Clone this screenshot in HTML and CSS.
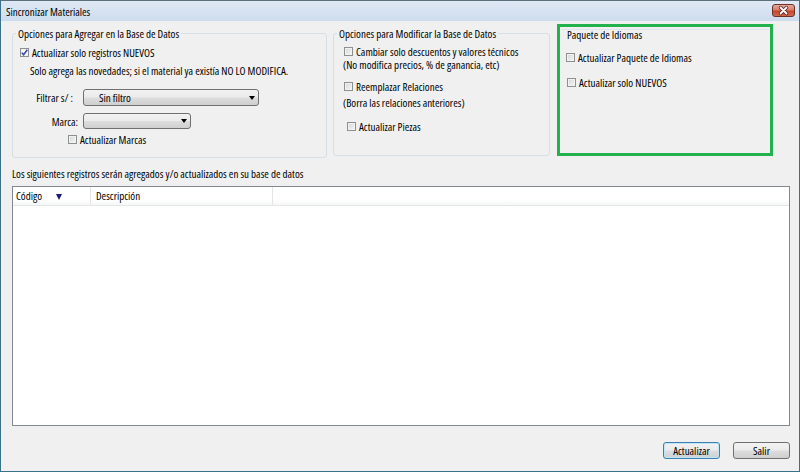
FILE: index.html
```html
<!DOCTYPE html>
<html lang="es">
<head>
<meta charset="utf-8">
<title>Sincronizar Materiales</title>
<link rel="stylesheet" href="styles.css">
</head>
<body>
<div class="window">
  <div class="titlebar">
    <span class="title">Sincronizar Materiales</span>
    <span class="close">
      <svg width="21" height="11" viewBox="0 0 21 11">
        <path d="M7.5 2.5 L13.5 8.5 M13.5 2.5 L7.5 8.5" stroke="#5b2017" stroke-width="3.4" stroke-linecap="round"/>
        <path d="M7.5 2.5 L13.5 8.5 M13.5 2.5 L7.5 8.5" stroke="#ffffff" stroke-width="1.8" stroke-linecap="round"/>
      </svg>
    </span>
  </div>
  <div class="body">
    <div class="groups">
      <fieldset class="group g1">
        <legend>Opciones para Agregar en la Base de Datos</legend>
        <div class="chk r1"><span class="box checked"><svg width="7" height="7" viewBox="0 0 7 7"><path d="M0.8 3.6 L2.6 5.8 L6.3 0.8" fill="none" stroke="#3348a8" stroke-width="1.5"/></svg></span>Actualizar solo registros NUEVOS</div>
        <div class="note n1">Solo agrega las novedades; si el material ya existía NO LO MODIFICA.</div>
        <div class="filters">
          <span class="flabel f1">Filtrar s/ :</span>
          <div class="combo wide"><span>Sin filtro</span><i class="arrow"></i></div>
          <span class="flabel">Marca:</span>
          <div class="combo narrow"><span></span><i class="arrow"></i></div>
        </div>
        <div class="chk marcas"><span class="box"></span>Actualizar Marcas</div>
      </fieldset>
      <fieldset class="group g2">
        <legend>Opciones para Modificar la Base de Datos</legend>
        <div class="chk r2a"><span class="box"></span>Cambiar solo descuentos y valores técnicos</div>
        <div class="note n2a">(No modifica precios, % de ganancia, etc)</div>
        <div class="chk r2b"><span class="box"></span>Reemplazar Relaciones</div>
        <div class="note n2b">(Borra las relaciones anteriores)</div>
        <div class="chk r2c"><span class="box"></span>Actualizar Piezas</div>
      </fieldset>
      <div class="green">
        <div class="g3line"></div>
        <div class="g3title">Paquete de Idiomas</div>
        <div class="chk r3a"><span class="box"></span>Actualizar Paquete de Idiomas</div>
        <div class="chk r3b"><span class="box"></span>Actualizar solo NUEVOS</div>
      </div>
    </div>
    <div class="caption">Los siguientes registros serán agregados y/o actualizados en su base de datos</div>
    <div class="list">
      <div class="list-head">
        <div class="col c1"><span>Código</span><i class="sort"></i></div>
        <div class="col c2">Descripción</div>
        <div class="col c3"></div>
      </div>
    </div>
    <div class="footer">
      <button class="btn default">Actualizar</button>
      <button class="btn">Salir</button>
    </div>
  </div>
</div>
</body>
</html>
```

FILE: styles.css
```css
html, body {
  margin: 0;
  padding: 0;
}

body {
  width: 800px;
  height: 472px;
  overflow: hidden;
  font-family: "Open Sans", "Liberation Sans", Arial, sans-serif;
  font-stretch: 75%;
  font-size: 11px;
  color: #000;
  background: #f0f0f0;
}

.window {
  box-sizing: border-box;
  width: 800px;
  height: 472px;
  border: 1px solid #3c6f88;
  border-top-color: #5c6f7c;
  background: #f0f0f0;
  display: flex;
  flex-direction: column;
}

.titlebar {
  flex: none;
  height: 20px;
  display: flex;
  align-items: center;
  justify-content: space-between;
  padding: 0 4px 0 5px;
  background: linear-gradient(#dfe9f5, #cddcee);
}

.title {
  line-height: 13px;
  padding-top: 1px;
}

.close {
  box-sizing: border-box;
  width: 23px;
  height: 13px;
  border: 1px solid #6e3128;
  border-radius: 3px;
  background: linear-gradient(#eaa99b, #d67b69 45%, #c44630 55%, #d0694c);
  display: flex;
  margin-top: -2px;
}

.body {
  flex: 1;
  display: flex;
  flex-direction: column;
  padding: 3px 9px 0 11px;
}

.groups {
  flex: none;
  height: 134px;
  display: flex;
  align-items: flex-start;
}

.group {
  box-sizing: border-box;
  margin: 0;
  padding: 0;
  min-width: 0;
  border: 1px solid #d5dfe5;
  border-radius: 3px;
}

.group legend {
  padding: 0 2px;
  margin-left: 3px;
  line-height: 13px;
}

.g1 {
  width: 315px;
  height: 131px;
  margin-top: 3px;
}

.g2 {
  width: 217px;
  height: 129px;
  margin: 3px 0 0 6px;
}

.green {
  box-sizing: border-box;
  width: 216px;
  height: 132px;
  margin-left: 7px;
  border: 3px solid #22b14c;
  display: flex;
  flex-direction: column;
  align-items: flex-start;
}

.g3line {
  align-self: stretch;
  margin: 2px 1px 0 1px;
  border-top: 1px solid #dfe5ea;
}

.g3title {
  line-height: 13px;
  margin: -2px 0 0 7px;
}

.chk {
  display: flex;
  align-items: center;
  height: 13px;
  line-height: 13px;
  white-space: nowrap;
}

.box {
  box-sizing: border-box;
  flex: none;
  width: 9px;
  height: 9px;
  margin-right: 3px;
  border: 1px solid #8e8f8f;
  background: linear-gradient(135deg, #d3d5d8, #f7f7f7);
  box-shadow: inset 0 0 0 1px #f2f2f2;
  display: flex;
  align-items: center;
  justify-content: center;
}

.box.checked {
  background: #fdfdfd;
}

.note {
  line-height: 13px;
  white-space: nowrap;
}

.r1 { margin: 6px 0 0 7px; }
.n1 { margin: 5px 0 0 17px; }

.filters {
  display: grid;
  grid-template-columns: 65px auto;
  column-gap: 5px;
  row-gap: 7px;
  align-items: center;
  justify-items: start;
  margin-top: 12px;
}

.flabel {
  justify-self: end;
  line-height: 13px;
}

.flabel.f1 { padding-right: 5px; }

.combo {
  box-sizing: border-box;
  display: flex;
  align-items: center;
  justify-content: space-between;
  border: 1px solid #707070;
  border-radius: 3px;
  background: linear-gradient(#f2f2f2, #ebebeb 48%, #dddddd 52%, #cfcfcf);
  padding: 0 2px 0 15px;
}

.combo.wide { width: 176px; height: 17px; }
.combo.narrow { width: 108px; height: 16px; }

.arrow {
  width: 0;
  height: 0;
  border-left: 3px solid transparent;
  border-right: 3px solid transparent;
  border-top: 4px solid #000;
  margin-right: 1px;
}

.marcas { margin: 4px 0 0 55px; }

.r2a { margin: 5px 0 0 10px; }
.n2a { margin: 0 0 0 9px; }
.r2b { margin: 9px 0 0 10px; }
.n2b { margin: 3px 0 0 9px; }
.r2c { margin: 11px 0 0 13px; }

.r3a { margin: 10px 0 0 6px; }
.r3b { margin: 12px 0 0 7px; }

.caption {
  flex: none;
  line-height: 13px;
  margin-top: 9px;
}

.list {
  flex: none;
  box-sizing: border-box;
  height: 240px;
  margin-top: 6px;
  border: 1px solid #828790;
  background: #fff;
}

.list-head {
  display: flex;
  height: 19px;
  box-sizing: border-box;
  border-bottom: 1px solid #e5e5e5;
  background: linear-gradient(#ffffff, #ffffff 70%, #f5f6f7);
}

.col {
  box-sizing: border-box;
  height: 100%;
  padding-left: 3px;
  line-height: 18px;
  border-right: 1px solid #e5e5e5;
}

.c1 {
  width: 78px;
  display: grid;
  grid-template-columns: 40px auto;
  align-items: center;
}

.c2 { width: 182px; padding-left: 5px; }
.c3 { flex: 1; border-right: none; }

.sort {
  width: 0;
  height: 0;
  border-left: 3px solid transparent;
  border-right: 3px solid transparent;
  border-top: 6px solid #1a1a7e;
  margin-top: 1px;
}

.footer {
  flex: none;
  display: flex;
  justify-content: flex-end;
  gap: 13px;
  margin-top: 16px;
}

.btn {
  box-sizing: border-box;
  width: 57px;
  height: 17px;
  padding: 0;
  font: inherit;
  color: #000;
  line-height: 15px;
  border: 1px solid #707070;
  border-radius: 3px;
  background: linear-gradient(#f2f2f2, #ebebeb 48%, #dddddd 52%, #cfcfcf);
}

.btn.default {
  border-color: #3c7fb1;
  box-shadow: inset 0 0 0 1px #bfe6f7;
}
```
